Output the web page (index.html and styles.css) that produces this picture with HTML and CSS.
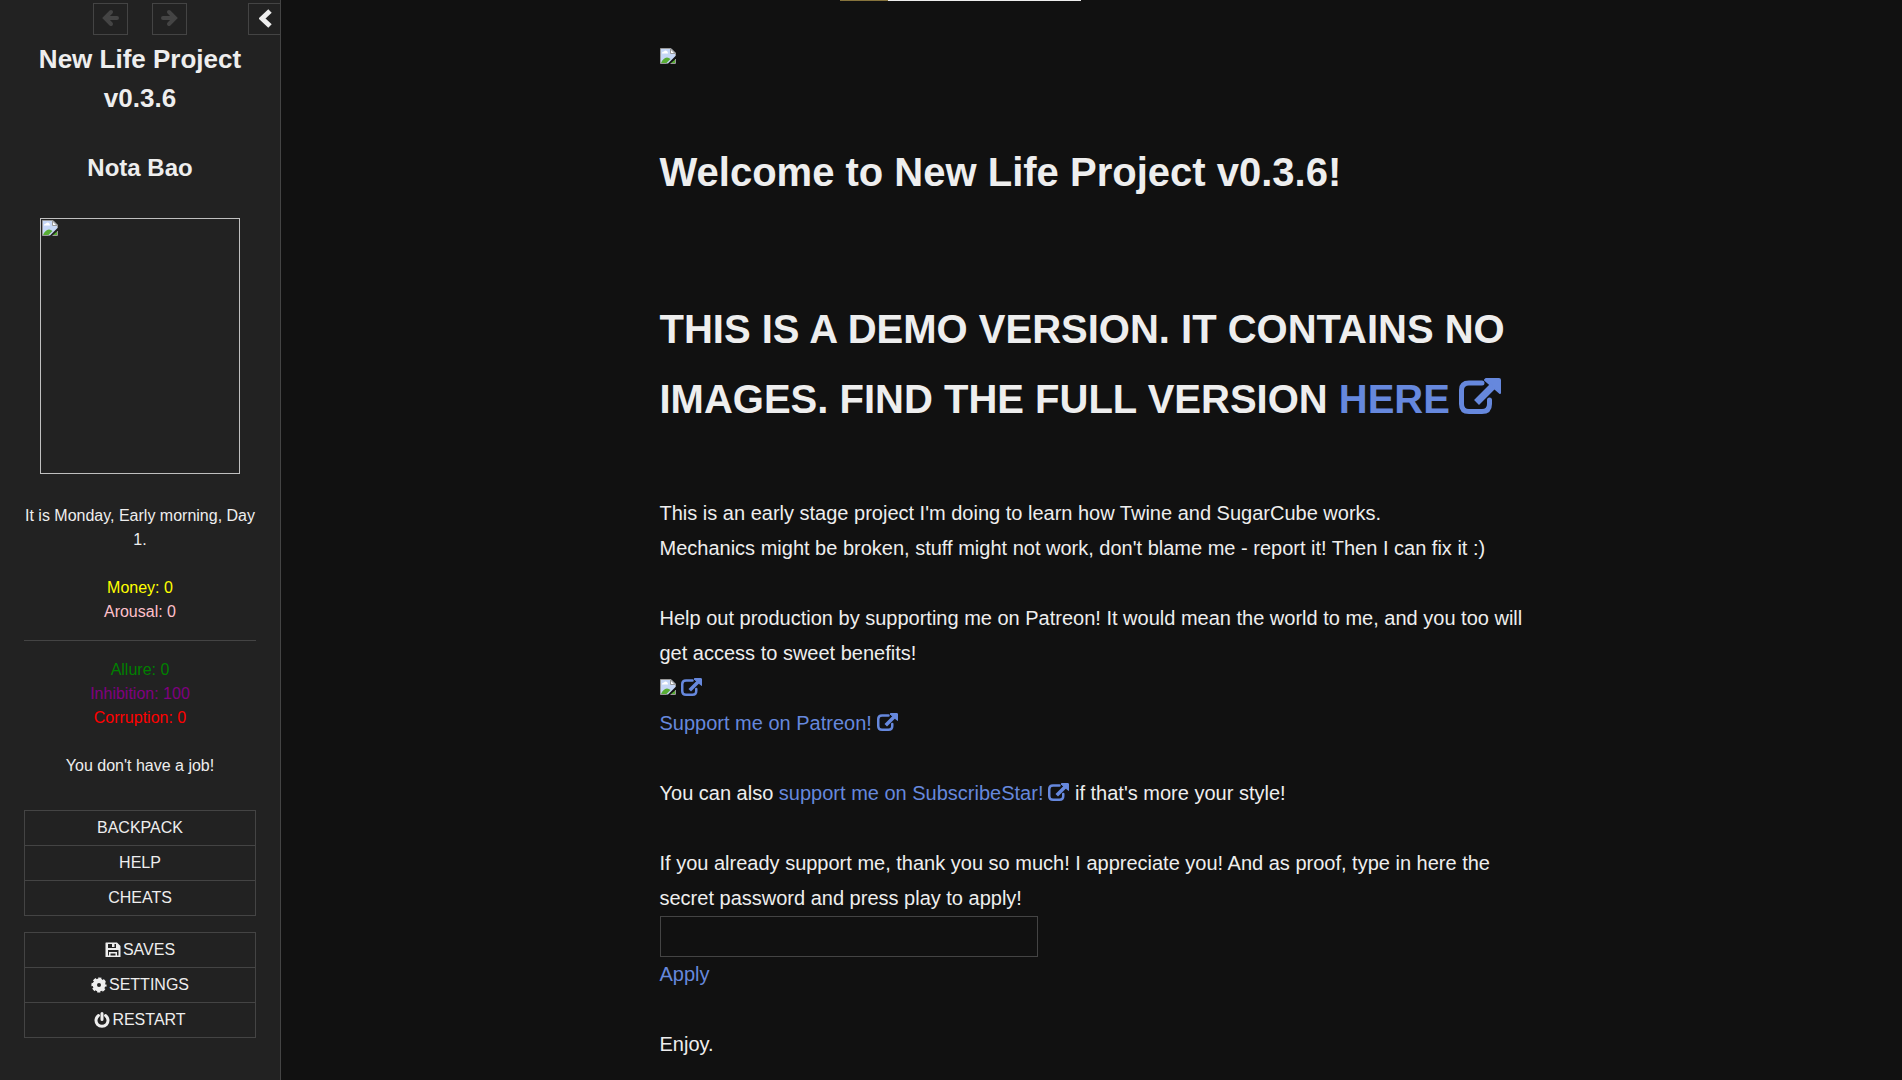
FILE: index.html
```
<!DOCTYPE html>
<html lang="en">
<head>
  <meta charset="UTF-8" />
  <meta name="viewport" content="width=device-width, initial-scale=1.0"/>
  <title>New Life Project</title>
  <link rel="stylesheet" href="styles.css">
</head>
<body>

<!-- shared icons -->
<svg class="sprite" aria-hidden="true">
  <symbol id="external" viewBox="0 0 42 36">
    <path d="M23 5H10Q2.500 5 2.500 12V26Q2.500 33.500 10 33.500H23Q30.500 33.500 30.500 26V22" fill="none" stroke="currentColor" stroke-width="5" stroke-linecap="round"/>
    <path d="M20 22L34 8" fill="none" stroke="currentColor" stroke-width="7" stroke-linecap="square"/>
    <path d="M27 1H40Q41 1 41 2V15L26 2Z" fill="currentColor" stroke="currentColor" stroke-width="2" stroke-linejoin="round"/>
  </symbol>
  <symbol id="broken" viewBox="0 0 16 16">
    <path d="M0.5 0.5H11L15.500 5V8L8 15.500H0.5Z" fill="#c6d7f6"/>
    <path d="M2 5Q2 3.500 4 3.500Q5 2 7 3Q8 4 8 5.500H2Z" fill="#fff"/>
    <path d="M1 15Q3 10 7 9.500Q9 9.500 10.500 11L6.500 15Z" fill="#58ad35"/>
    <path d="M11 15L15 11.500V15Z" fill="#58ad35"/>
    <path d="M6.500 15.500H0.500V0.500H11L15.500 5V8M15.500 11V15.500H10.500" fill="none" stroke="#999"/>
    <path d="M10.500 1V5.500H15Z" fill="#fff" stroke="#999"/>
  </symbol>
</svg>

<div class="top-strip"></div>

<div class="page">
  <aside class="sidebar">
    <div class="tray">
      <div class="history">
        <button class="tray-button" disabled aria-label="Go backward">
          <svg width="17" height="18" viewBox="0 0 17 18"><path d="M9 3L3 9L9 15M4 9H15" fill="none" stroke="currentColor" stroke-width="4" stroke-linecap="round"/></svg>
        </button>
        <button class="tray-button" disabled aria-label="Go forward">
          <svg width="17" height="18" viewBox="0 0 17 18"><path d="M8 3L14 9L8 15M13 9H2" fill="none" stroke="currentColor" stroke-width="4" stroke-linecap="round"/></svg>
        </button>
      </div>
      <button class="tray-button toggle" aria-label="Toggle the side bar">
        <svg width="13" height="19" viewBox="0 0 13 19"><path d="M11 2L3 9.500L11 17" fill="none" stroke="currentColor" stroke-width="5"/></svg>
      </button>
    </div>

    <div class="sidebar-body">
      <h1 class="title">New Life Project v0.3.6</h1>
      <h2 class="player">Nota Bao</h2>
      <div class="portrait"><svg class="broken"><use href="#broken"/></svg></div>

      <div class="caption">
        <p>It is Monday, Early morning, Day 1.</p>
        <p><span class="money">Money: 0</span><br><span class="arousal">Arousal: 0</span></p>
        <hr>
        <p><span class="allure">Allure: 0</span><br><span class="inhibition">Inhibition: 100</span><br><span class="corruption">Corruption: 0</span></p>
        <p>You don't have a job!</p>
      </div>

      <nav class="menus">
        <ul class="menu">
          <li><a href="#">Backpack</a></li>
          <li><a href="#">Help</a></li>
          <li><a href="#">Cheats</a></li>
        </ul>
        <ul class="menu">
          <li><a href="#">
            <svg width="16" height="16" viewBox="0 0 16 16"><path fill="currentColor" fill-rule="evenodd" d="M1 0.500H12L15.500 4V15H1Q0.500 15 0.500 14.500V1Q0.500 0.500 1 0.500ZM3 2V6H11V2H9.500V5H7V2ZM3 8V13.500H4V10H12V13.500H13.500V8ZM5.500 11.500V13.500H10.500V11.500Z"/></svg>Saves</a></li>
          <li><a href="#">
            <svg width="16" height="16" viewBox="0 0 16 16"><circle cx="8" cy="8" r="4.200" fill="none" stroke="currentColor" stroke-width="4.400"/><circle cx="8" cy="8" r="6.300" fill="none" stroke="currentColor" stroke-width="2.600" stroke-dasharray="3 1.948" stroke-dashoffset="1.500"/></svg>Settings</a></li>
          <li><a href="#">
            <svg width="16" height="16" viewBox="0 0 16 16"><path d="M4.500 3.500A6 6 0 1 0 11.500 3.500M8 1.500V7.500" fill="none" stroke="currentColor" stroke-width="3" stroke-linecap="round"/></svg>Restart</a></li>
        </ul>
      </nav>
    </div>
  </aside>

  <main class="story">
    <div class="passage">
      <p><svg class="broken"><use href="#broken"/></svg></p>
      <h1 class="welcome">Welcome to New Life Project v0.3.6!</h1>
      <h1 class="demo">THIS IS A DEMO VERSION. IT CONTAINS NO IMAGES. FIND THE FULL VERSION <a href="#">HERE<svg class="external"><use href="#external"/></svg></a></h1>

      <p>This is an early stage project I'm doing to learn how Twine and SugarCube works.<br>
      Mechanics might be broken, stuff might not work, don't blame me - report it! Then I can fix it :)</p>

      <p>Help out production by supporting me on Patreon! It would mean the world to me, and you too will get access to sweet benefits!<br>
      <a href="#" aria-label="Patreon"><svg class="broken"><use href="#broken"/></svg><svg class="external"><use href="#external"/></svg></a><br>
      <a href="#">Support me on Patreon!<svg class="external"><use href="#external"/></svg></a></p>

      <p>You can also <a href="#">support me on SubscribeStar!<svg class="external"><use href="#external"/></svg></a> if that's more your style!</p>

      <div class="supporter">
        <label for="password">If you already support me, thank you so much! I appreciate you! And as proof, type in here the secret password and press play to apply!</label>
        <input type="text" id="password">
        <a href="#">Apply</a>
      </div>

      <p>Enjoy.</p>
    </div>
  </main>
</div>

</body>
</html>
```

FILE: styles.css
```
* {
  box-sizing: border-box;
}

body {
  margin: 0;
  background: #111;
  color: #eee;
  font-family: "Liberation Sans", Arial, Helvetica, sans-serif;
  font-size: 16px;
  line-height: 24px;
}

h1, h2, p, ul {
  margin: 0;
  padding: 0;
}

a {
  color: #68d;
  text-decoration: none;
}

a:hover {
  color: #8af;
  text-decoration: underline;
}

.sprite {
  display: none;
}

/* tab peeking in from above the page */
.top-strip {
  position: absolute;
  top: 0;
  left: 840px;
  width: 241px;
  height: 1px;
  background: linear-gradient(to right, #86733c 20%, #eee 20%);
}

.page {
  display: flex;
  min-height: 100vh;
}

/* side bar */
.sidebar {
  flex: 0 0 281px;
  background: #222;
  border-right: 1px solid #444;
  text-align: center;
}

.tray {
  display: grid;
  grid-template-columns: 1fr auto 1fr;
  padding-top: 3px;
}

.history {
  grid-column: 2;
  display: flex;
  gap: 24px;
}

.tray-button {
  display: flex;
  align-items: center;
  justify-content: center;
  width: 35px;
  height: 32px;
  padding: 0 0 2px;
  background: transparent;
  border: 1px solid #444;
  color: #eee;
  cursor: pointer;
}

.tray-button:disabled {
  color: #444;
  cursor: default;
}

.toggle {
  justify-self: end;
  width: 32px;
  padding-left: 2px;
  border-right: 0;
}

.sidebar-body {
  padding: 5px 24px 32px;
}

.title {
  font-size: 26px;
  line-height: 39px;
}

.player {
  margin: 32px 0;
  font-size: 24px;
  line-height: 36px;
}

.portrait {
  display: flex;
  width: 200px;
  height: 256px;
  margin: 0 auto 30px;
  padding: 1px;
  border: 1px solid #c0c0c0;
}

.broken {
  width: 16px;
  height: 16px;
}

.caption {
  margin-bottom: 32px;
}

.caption p + p {
  margin-top: 24px;
}

.caption hr {
  margin: 16px 0 17px;
  border: 0;
  border-top: 1px solid #444;
}

.money {
  color: yellow;
}

.arousal {
  color: pink;
}

.allure {
  color: green;
}

.inhibition {
  color: purple;
}

.corruption {
  color: red;
}

.menus {
  display: flex;
  flex-direction: column;
  gap: 16px;
}

.menu {
  border: 1px solid #444;
  list-style: none;
}

.menu li + li {
  border-top: 1px solid #444;
}

.menu a {
  display: flex;
  align-items: center;
  justify-content: center;
  gap: 2px;
  height: 34px;
  color: #eee;
  text-transform: uppercase;
}

.menu a:hover {
  background: #444;
  text-decoration: none;
}

/* story */
.story {
  flex: 1;
  padding: 40px 40px 16px;
  font-size: 20px;
  line-height: 35px;
}

.passage {
  max-width: 864px;
  margin: 0 auto;
}

.passage p {
  margin-bottom: 35px;
}

.passage p:last-child {
  margin-bottom: 0;
}

.passage h1 {
  font-size: 40px;
  line-height: 70px;
}

.passage .welcome {
  margin: 62px 0 87px;
}

.passage .demo {
  margin-bottom: 62px;
}

.external {
  width: 21px;
  height: 18px;
  margin-left: 5px;
  vertical-align: -1px;
}

.demo .external {
  width: 42px;
  height: 36px;
  margin-left: 9px;
}

.supporter {
  margin-bottom: 35px;
}

.supporter label,
.supporter input,
.supporter a {
  display: block;
}

.supporter input {
  width: 378px;
  max-width: 100%;
  height: 41px;
  padding: 8px;
  background: transparent;
  border: 1px solid #444;
  color: #eee;
  font: inherit;
}
```
